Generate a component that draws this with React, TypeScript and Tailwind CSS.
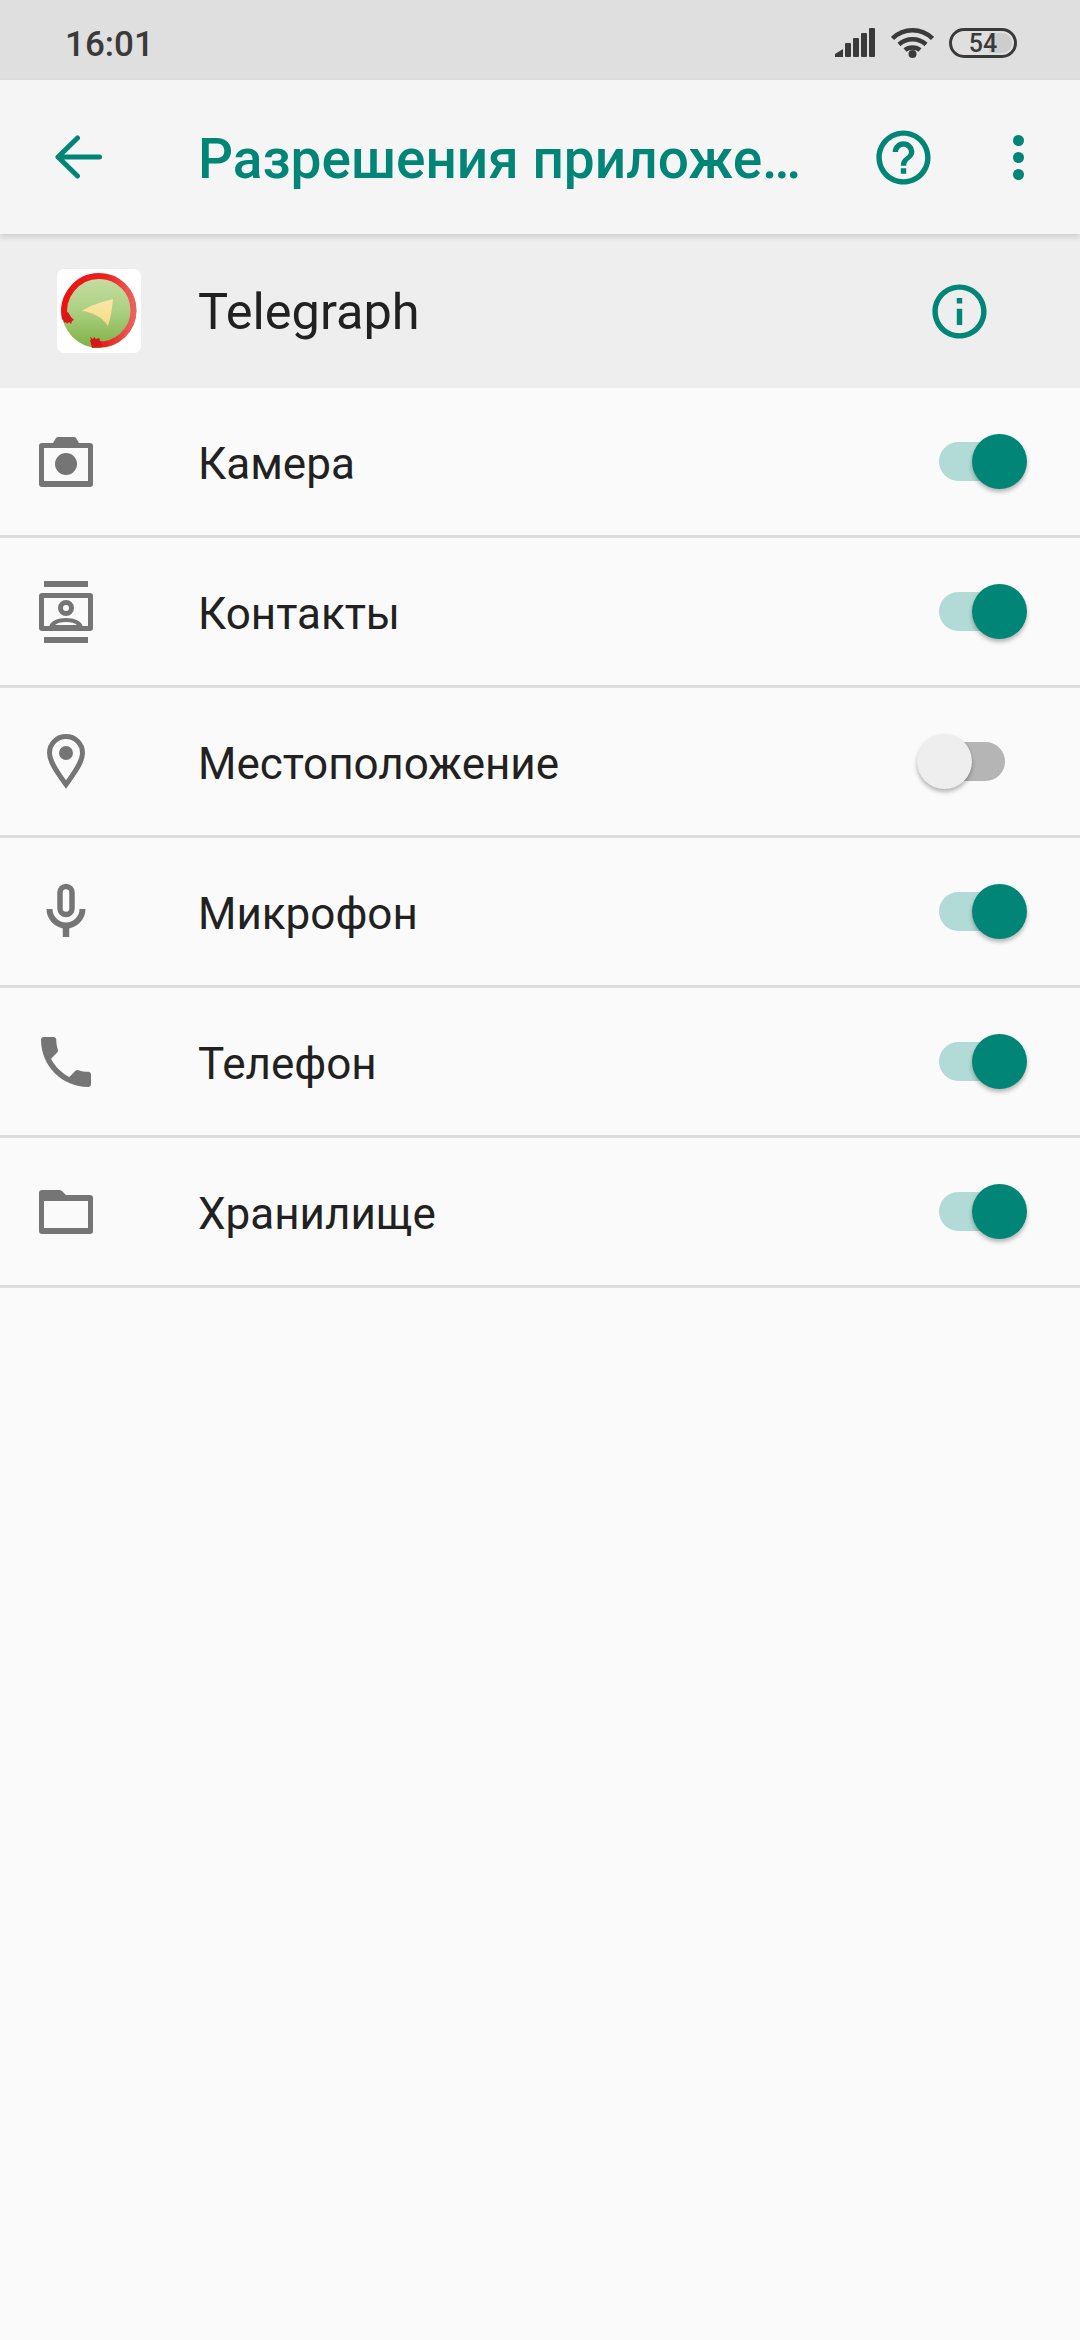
const TEAL = "#008577";
const GRAY = "#757575";

function Toggle({ on }: { on: boolean }) {
  return (
    <div className="relative h-[55px] w-[110px] shrink-0">
      <div className={`absolute left-[22px] top-[8px] h-[39px] w-[66px] rounded-full ${on ? "bg-[#b2dad6]" : "bg-[#b5b5b5]"}`} />
      <div
        className={`absolute top-0 h-[55px] w-[55px] rounded-full shadow-[0_3px_4px_rgba(0,0,0,0.28)] ${on ? "left-[55px] bg-[#008577]" : "left-0 bg-[#eeeeee]"}`}
      />
    </div>
  );
}

function Camera() {
  return (
    <svg width="72" height="72" viewBox="0 0 72 72" fill={GRAY}>
      <path fillRule="evenodd" d="M12 17h11l3-5q1-1 2-1h16q1 0 2 1l3 5h11q3 0 3 3v38q0 3-3 3H12q-3 0-3-3V20q0-3 3-3zM14 22v33h44V22z" />
      <circle cx="36" cy="38" r="11" />
    </svg>
  );
}

function Contacts() {
  return (
    <svg width="72" height="72" viewBox="0 0 72 72" fill={GRAY}>
      <rect x="14" y="5" width="44" height="6" />
      <rect x="14" y="61" width="44" height="6" />
      <path fillRule="evenodd" d="M12 17h48q3 0 3 3v32q0 3-3 3H12q-3 0-3-3V20q0-3 3-3zM14 22v28h44V22z" />
      <path fillRule="evenodd" d="M36 24a8 8 0 1 1 0 16a8 8 0 0 1 0-16zm0 5a3 3 0 1 0 0 6a3 3 0 0 0 0-6z" />
      <path fillRule="evenodd" d="M19 51c1-6 9-9 17-9s16 3 17 9zM25 49h22c-2-2-6-3-11-3s-9 1-11 3z" />
    </svg>
  );
}

function Pin() {
  return (
    <svg width="72" height="72" viewBox="0 0 72 72" fill={GRAY}>
      <path fill="none" stroke={GRAY} strokeWidth="5" d="M36 10.5C27 10.5 19.5 17.5 19.5 27C19.5 37 30 50 36 58.5C42 50 52.5 37 52.5 27C52.5 17.5 45 10.5 36 10.5Z" />
      <circle cx="36" cy="27" r="7" />
    </svg>
  );
}

function Mic() {
  return (
    <svg width="72" height="72" viewBox="0 0 72 72" fill="none" stroke={GRAY} strokeWidth="6">
      <rect x="30" y="10.5" width="12" height="28" rx="6" strokeWidth="5.5" />
      <path d="M19.5 33C19.5 42 27 49.5 36 49.5C45 49.5 52.5 42 52.5 33" />
      <path d="M36 49V61" strokeWidth="6.5" />
    </svg>
  );
}

function Phone() {
  return (
    <svg width="72" height="72" viewBox="0 0 24 24" fill={GRAY}>
      <g transform="translate(12 12) scale(.926) translate(-12 -12)">
        <path d="M6.62 10.79c1.44 2.83 3.76 5.14 6.59 6.59l2.2-2.2c.27-.27.67-.36 1.02-.24 1.12.37 2.33.57 3.57.57.55 0 1 .45 1 1V20c0 .55-.45 1-1 1-9.39 0-17-7.61-17-17 0-.55.45-1 1-1h3.5c.55 0 1 .45 1 1 0 1.25.2 2.45.57 3.57.11.35.03.74-.25 1.02l-2.2 2.2z" />
      </g>
    </svg>
  );
}

function Folder() {
  return (
    <svg width="72" height="72" viewBox="0 0 72 72" fill={GRAY}>
      <path fillRule="evenodd" d="M12 14h17q2 0 3 1l4 4h24q3 0 3 3v33q0 3-3 3H12q-3 0-3-3V17q0-3 3-3zM14 25v27h44V25z" />
    </svg>
  );
}

function AppIcon() {
  return (
    <div className="flex h-[84px] w-[84px] items-center justify-center rounded-[7px] bg-white">
      <svg width="84" height="84" viewBox="0 0 84 84">
        <defs>
          <linearGradient id="g" x1="0" y1="0" x2="0" y2="1">
            <stop offset="0" stopColor="#c8dfa8" />
            <stop offset="0.5" stopColor="#acd082" />
            <stop offset="1" stopColor="#7fb145" />
          </linearGradient>
          <linearGradient id="r" x1="0" y1="0" x2="1" y2="0">
            <stop offset="0" stopColor="#ee1111" />
            <stop offset="0.6" stopColor="#ee2020" />
            <stop offset="1" stopColor="#ec6060" />
          </linearGradient>
          <linearGradient id="p" x1="0" y1="0" x2="0" y2="1">
            <stop offset="0" stopColor="#fbe9a8" />
            <stop offset="1" stopColor="#f5d987" />
          </linearGradient>
        </defs>
        <circle cx="42" cy="41.500" r="37.500" fill="url(#g)" />
        <path
          d="M8 50C3 28 20 7 42 7C61 7 76.500 22 76.500 41.500C76.500 61 60 77 38 75.500"
          fill="none"
          stroke="url(#r)"
          strokeWidth="6"
        />
        <path d="M5 46l2 8 2-1 1 2 2-2 2 2 1-3 2-1-3-3-3-5z" fill="#d81818" />
        <path d="M35 79l-2-8 1 0-1-3 3 2 1-2 2 2 3-1 4 9z" fill="#d81818" />
        <path d="M24.700 42C34 36 45 33 56 30C55 39 54 48 51 57C46 49 36 43 24.700 42Z" fill="url(#p)" />
      </svg>
    </div>
  );
}

const rows: { label: string; on: boolean; Icon: () => React.ReactElement }[] = [
  { label: "Камера", on: true, Icon: Camera },
  { label: "Контакты", on: true, Icon: Contacts },
  { label: "Местоположение", on: false, Icon: Pin },
  { label: "Микрофон", on: true, Icon: Mic },
  { label: "Телефон", on: true, Icon: Phone },
  { label: "Хранилище", on: true, Icon: Folder },
];

export default function App() {
  return (
    <div className="flex h-[2340px] w-[1080px] flex-col overflow-hidden bg-[#fafafa] font-['Roboto',sans-serif]">
      <div className="flex h-[80px] shrink-0 items-center bg-[#dfdfdf] pl-[65px] pr-[63px] pt-[6px]">
        <span className="mt-[2px] text-[35px] font-medium leading-none text-[#3a3a3a]">16:01</span>
        <div className="ml-auto flex items-center">
          <svg width="40" height="30" viewBox="0 0 40 30" fill="#3a3a3a">
            <path d="M0 29v-3l8-5v8z" />
            <rect x="10" y="15" width="6" height="14" rx="1" />
            <rect x="18" y="10" width="6" height="19" rx="1" />
            <rect x="26" y="5" width="6" height="24" rx="1" />
            <rect x="34" y="0" width="6" height="29" rx="1" />
          </svg>
          <svg className="ml-[16px]" width="43" height="30" viewBox="0 0 43 30" fill="none" stroke="#3a3a3a" strokeWidth="4.500">
            <path d="M1.500 10.500C12.500 -0.500 30.500 -0.500 41.500 10.500" />
            <path d="M8 16.500C15.500 9.500 27.500 9.500 35 16.500" />
            <path d="M14 22C18 18.500 25 18.500 29 22" />
            <circle cx="21.500" cy="26" r="4" fill="#3a3a3a" stroke="none" />
          </svg>
          <div className="relative ml-[15px] flex h-[30px] w-[68px] items-center justify-center overflow-hidden rounded-full border-[3px] border-[#3a3a3a]">
            <div className="absolute bottom-[2px] right-[2px] top-[2px] w-[23px] rounded-r-full bg-[#cdcdcd]" />
            <span className="relative text-[25px] font-medium leading-none text-[#3a3a3a]">54</span>
          </div>
        </div>
      </div>

      <div className="relative z-10 flex h-[154px] shrink-0 items-center bg-[#f5f5f5] shadow-[0_3px_6px_rgba(0,0,0,0.14)]">
        <svg className="ml-[53px] shrink-0" width="50" height="44" viewBox="0 0 50 44" fill="none" stroke={TEAL} strokeWidth="5" strokeLinecap="round" strokeLinejoin="round">
          <path d="M46.500 22H5M24.500 3L5 22L24.500 41" />
        </svg>
        <span className="ml-[95px] mt-[4px] text-[55px] font-medium leading-none text-[#008577]">Разрешения приложе…</span>
        <svg className="ml-auto shrink-0 translate-x-[1px]" width="65" height="65" viewBox="0 0 24 24" fill={TEAL}>
          <path d="M11 18h2v-2h-2v2zm1-16C6.480 2 2 6.480 2 12s4.480 10 10 10 10-4.480 10-10S17.520 2 12 2zm0 18c-4.410 0-8-3.590-8-8s3.590-8 8-8 8 3.590 8 8-3.590 8-8 8zm0-14c-2.210 0-4 1.790-4 4h2c0-1.100.9-2 2-2s2 .9 2 2c0 2-3 1.750-3 5h2c0-2.250 3-2.500 3-5 0-2.210-1.790-4-4-4z" />
        </svg>
        <div className="ml-[78px] mr-[56px] flex shrink-0 flex-col gap-[6px]">
          <div className="h-[11px] w-[11px] rounded-full bg-[#008577]" />
          <div className="h-[11px] w-[11px] rounded-full bg-[#008577]" />
          <div className="h-[11px] w-[11px] rounded-full bg-[#008577]" />
        </div>
      </div>

      <div className="flex h-[154px] shrink-0 items-center bg-[#eeeeee] pl-[57px]">
        <AppIcon />
        <span className="ml-[57px] mt-[2px] text-[50.5px] leading-none text-[#212121]">Telegraph</span>
        <svg className="ml-auto mr-[88px] shrink-0" width="65" height="65" viewBox="0 0 24 24" fill={TEAL}>
          <path d="M11 7h2v2h-2zm0 4h2v6h-2zm1-9C6.480 2 2 6.480 2 12s4.480 10 10 10 10-4.480 10-10S17.520 2 12 2zm0 18c-4.410 0-8-3.590-8-8s3.590-8 8-8 8 3.590 8 8-3.590 8-8 8z" />
        </svg>
      </div>

      {rows.map(({ label, on, Icon }) => (
        <div key={label} className="flex h-[150px] shrink-0 items-center border-b-[3px] border-[#dddddd] pl-[30px] pr-[53px]">
          <Icon />
          <span className="ml-[96px] mt-[4px] text-[44px] leading-none text-[#212121]">{label}</span>
          <div className="ml-auto">
            <Toggle on={on} />
          </div>
        </div>
      ))}
    </div>
  );
}
